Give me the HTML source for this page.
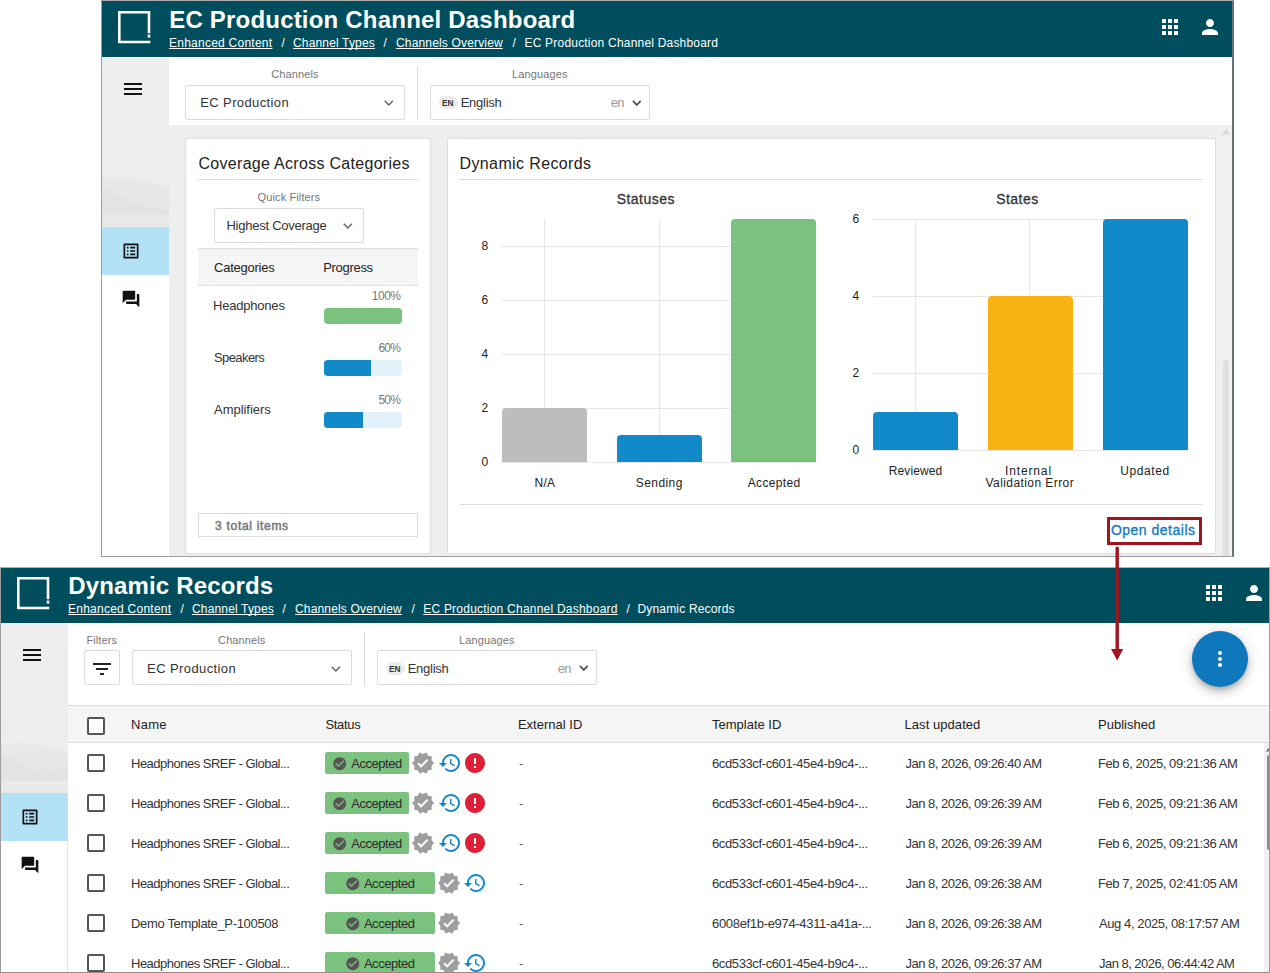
<!DOCTYPE html>
<html><head><meta charset="utf-8"><title>Dynamic Records</title>
<style>
html,body{margin:0;padding:0;background:#fff}
body{width:1270px;height:973px;position:relative;overflow:hidden;font-family:"Liberation Sans",sans-serif}
#p{position:absolute;left:0;top:0;width:1270px;height:973px;overflow:hidden}
#p div,#p svg,#p span{position:absolute;box-sizing:border-box}
#p span{white-space:nowrap;line-height:20px;height:20px}
#p u{text-decoration:underline;text-decoration-thickness:1px;text-underline-offset:1.1px;text-decoration-skip-ink:none}
</style></head>
<body><div id="p">
<div style="left:101px;top:0px;width:1133px;height:557px;border:1px solid #9c9c9c;border-top-color:#aaa;border-right:2px solid #69717b;background:#eee"></div>
<div style="left:102px;top:1px;width:1130px;height:56px;background:#004e5d"></div>
<svg style="left:117.5px;top:11.0px" width="34" height="34" viewBox="0 0 34 34"><path d="M0 1.3 H31 V22.2 M32.3 31 H1.3 V1.3" fill="none" stroke="#fff" stroke-width="2.6" stroke-linejoin="miter" stroke-linecap="butt"/><rect x="29.7" y="23.6" width="2.6" height="3" fill="#fff"/></svg>
<span style="left:169.2px;top:9.93px;font-size:24px;color:#fff;font-weight:bold;letter-spacing:0.201px;">EC Production Channel Dashboard</span>
<span style="left:169px;top:33.09px;font-size:12px;color:#fff;letter-spacing:0.248px;"><u>Enhanced Content</u></span>
<span style="left:281.5px;top:33.09px;font-size:12px;color:#fff;">/</span>
<span style="left:293px;top:33.09px;font-size:12px;color:#fff;letter-spacing:0.162px;"><u>Channel Types</u></span>
<span style="left:383.5px;top:33.09px;font-size:12px;color:#fff;">/</span>
<span style="left:396px;top:33.09px;font-size:12px;color:#fff;letter-spacing:0.164px;"><u>Channels Overview</u></span>
<span style="left:512.5px;top:33.09px;font-size:12px;color:#fff;">/</span>
<span style="left:524.5px;top:33.09px;font-size:12px;color:#fff;letter-spacing:0.201px;">EC Production Channel Dashboard</span>
<svg style="left:1158px;top:15px;" width="24" height="24" viewBox="0 0 24 24"><path fill="#fff" d="M4 8h4V4H4v4zm6 12h4v-4h-4v4zm-6 0h4v-4H4v4zm0-6h4v-4H4v4zm6 0h4v-4h-4v4zm6-10v4h4V4h-4zm-6 4h4V4h-4v4zm6 6h4v-4h-4v4zm0 6h4v-4h-4v4z"/></svg>
<svg style="left:1198px;top:15px;" width="24" height="24" viewBox="0 0 24 24"><path fill="#fff" d="M12 12c2.21 0 4-1.79 4-4s-1.79-4-4-4-4 1.79-4 4 1.79 4 4 4zm0 2c-2.67 0-8 1.34-8 4v2h16v-2c0-2.66-5.33-4-8-4z"/></svg>
<svg style="left:102px;top:57px" width="67" height="170" viewBox="0 0 67 170"><defs><linearGradient id="sg57" x1="0" y1="0" x2="0" y2="1"><stop offset="0" stop-color="#eeeeee"/><stop offset="0.7" stop-color="#eeeded"/><stop offset="1" stop-color="#ececec"/></linearGradient><linearGradient id="mg57" x1="0" y1="0" x2="0" y2="1"><stop offset="0" stop-color="#e9e9e9"/><stop offset="1" stop-color="#e4e4e4"/></linearGradient></defs><rect width="67" height="170" fill="url(#sg57)"/><path d="M0 118 L3 120.5 L6 122.5 L10 121 L16 120 L26 119.8 L33 121 L44 124 L55 127 L67 130 V158.5 H0 Z" fill="url(#mg57)"/><path d="M0 132 L14 137 L30 146 L48 150 L67 153 V158.5 H0 Z" fill="#e2e2e2" opacity="0.55"/><rect y="158.5" width="67" height="1.5" fill="#ececec"/><rect y="160" width="67" height="10" fill="#e8e8e8"/></svg>
<div style="left:102px;top:227px;width:67px;height:48px;background:#b3e2f7"></div>
<div style="left:102px;top:275px;width:67px;height:281px;background:#fff"></div>
<svg style="left:120.6px;top:77.2px;" width="24" height="24" viewBox="0 0 24 24"><path fill="#111" d="M3 18h18v-2H3v2zm0-5h18v-2H3v2zm0-7v2h18V6H3z"/></svg>
<svg style="left:121px;top:241px;" width="20" height="20" viewBox="0 0 24 24"><path fill="#111" d="M19 5v14H5V5h14m1.1-2H3.9c-.5 0-.9.4-.9.9v16.2c0 .4.4.9.9.9h16.2c.4 0 .9-.5.9-.9V3.9c0-.5-.5-.9-.9-.9zM11 7h6v2h-6V7zm0 4h6v2h-6v-2zm0 4h6v2h-6zM7 7h2v2H7zm0 4h2v2H7zm0 4h2v2H7z"/></svg>
<svg style="left:121px;top:289px;" width="20" height="20" viewBox="0 0 24 24"><path fill="#111" d="M21 6h-2v9H6v2c0 .55.45 1 1 1h11l4 4V7c0-.55-.45-1-1-1zm-4 6V3c0-.55-.45-1-1-1H3c-.55 0-1 .45-1 1v14l4-4h10c.55 0 1-.45 1-1z"/></svg>
<div style="left:169px;top:57px;width:1063px;height:68px;background:#fff"></div>
<span style="left:271.3px;top:64.44px;font-size:11px;color:#757575;letter-spacing:0.103px;">Channels</span>
<div style="left:185px;top:84.5px;width:220px;height:35px;background:#fff;border:1px solid #dadada;border-radius:2px"></div>
<span style="left:200.3px;top:92.75px;font-size:13px;color:#333;letter-spacing:0.376px;">EC Production</span>
<svg style="left:383px;top:98.8px" width="11.6" height="8" viewBox="-1 -1 11.6 8"><path d="M0.75 0.75 L4.8 5 L8.85 0.75" fill="none" stroke="#666" stroke-width="1.5" stroke-linecap="butt" stroke-linejoin="miter"/></svg>
<div style="left:417px;top:66px;width:1px;height:54px;background:#dcdcdc"></div>
<span style="left:512px;top:64.44px;font-size:11px;color:#757575;letter-spacing:0.132px;">Languages</span>
<div style="left:430px;top:84.5px;width:220px;height:35px;background:#fff;border:1px solid #dadada;border-radius:2px"></div>
<div style="left:439px;top:96.0px;width:18.5px;height:13px;background:#ececec;border-radius:6.5px"></div>
<span style="left:442.4px;top:92.96px;font-size:9.5px;color:#333;font-weight:bold;transform:scaleX(.87);transform-origin:0 50%;">EN</span>
<span style="left:460.7px;top:92.75px;font-size:13px;color:#333;letter-spacing:-0.268px;">English</span>
<span style="left:610.8px;top:92.75px;font-size:13px;color:#999;letter-spacing:-0.830px;">en</span>
<svg style="left:631.2px;top:98.8px" width="11.6" height="7.9" viewBox="-1 -1 11.6 7.9"><path d="M0.9 0.9 L4.8 4.9 L8.7 0.9" fill="none" stroke="#555" stroke-width="1.8" stroke-linecap="butt" stroke-linejoin="miter"/></svg>
<div style="left:1216px;top:125px;width:16px;height:431px;background:#f0f0f0"></div>
<div style="left:1223px;top:360px;width:6px;height:196px;background:#e0e0e0;border-radius:3px 3px 0 0"></div>
<svg style="left:1221px;top:128px" width="10" height="7" viewBox="0 0 10 7"><path d="M0.5 6.5 L5 0.5 L9.5 6.5 Z" fill="#dedede"/></svg>
<div style="left:185px;top:138px;width:246px;height:416px;background:#fff;border:1px solid #dedede"></div>
<span style="left:198.5px;top:153.71px;font-size:16px;color:#222;letter-spacing:0.294px;">Coverage Across Categories</span>
<div style="left:198px;top:179px;width:220px;height:1px;background:#dcdcdc"></div>
<span style="left:257.6px;top:187.44px;font-size:11px;color:#757575;letter-spacing:0.115px;">Quick Filters</span>
<div style="left:214px;top:207.5px;width:150px;height:35px;background:#fff;border:1px solid #dadada;border-radius:2px"></div>
<span style="left:226.4px;top:215.75px;font-size:13px;color:#333;letter-spacing:-0.242px;">Highest Coverage</span>
<svg style="left:342.2px;top:221.8px" width="11.6" height="8" viewBox="-1 -1 11.6 8"><path d="M0.75 0.75 L4.8 5 L8.85 0.75" fill="none" stroke="#666" stroke-width="1.5" stroke-linecap="butt" stroke-linejoin="miter"/></svg>
<div style="left:198px;top:248px;width:220px;height:38px;background:#f5f5f5;border-top:1px solid #dcdcdc;border-bottom:1px solid #dcdcdc"></div>
<span style="left:214px;top:257.75px;font-size:13px;color:#222;letter-spacing:-0.241px;">Categories</span>
<span style="left:323.2px;top:257.75px;font-size:13px;color:#222;letter-spacing:-0.303px;">Progress</span>
<span style="left:213px;top:295.75px;font-size:13px;color:#333;letter-spacing:-0.203px;">Headphones</span>
<span style="left:371.8px;top:286.09px;font-size:12px;color:#777;letter-spacing:-0.507px;">100%</span>
<div style="left:324px;top:308px;width:78px;height:16px;background:#7bc27f;border-radius:4px;overflow:hidden"></div>
<span style="left:214px;top:347.75px;font-size:13px;color:#333;letter-spacing:-0.589px;">Speakers</span>
<span style="left:378.4px;top:338.09px;font-size:12px;color:#777;letter-spacing:-0.724px;">60%</span>
<div style="left:324px;top:360px;width:78px;height:16px;background:#e2f1fa;border-radius:4px;overflow:hidden"></div>
<div style="left:324px;top:360px;width:47px;height:16px;background:#128aca;border-radius:4px 0 0 4px"></div>
<span style="left:214px;top:399.75px;font-size:13px;color:#333;letter-spacing:-0.029px;">Amplifiers</span>
<span style="left:378.4px;top:390.09px;font-size:12px;color:#777;letter-spacing:-0.724px;">50%</span>
<div style="left:324px;top:412px;width:78px;height:16px;background:#e2f1fa;border-radius:4px;overflow:hidden"></div>
<div style="left:324px;top:412px;width:39px;height:16px;background:#128aca;border-radius:4px 0 0 4px"></div>
<div style="left:198px;top:513px;width:220px;height:24px;border:1px solid #dcdcdc;background:#fff"></div>
<span style="left:215.1px;top:516.09px;font-size:12px;color:#777;letter-spacing:0.692px;-webkit-text-stroke:0.5px currentColor;">3 total items</span>
<div style="left:447px;top:138px;width:769px;height:416px;background:#fff;border:1px solid #dedede"></div>
<span style="left:459.5px;top:153.71px;font-size:16px;color:#222;letter-spacing:0.382px;">Dynamic Records</span>
<div style="left:460px;top:179px;width:743px;height:1px;background:#dcdcdc"></div>
<div style="left:460px;top:504px;width:743px;height:1px;background:#dcdcdc"></div>
<span style="left:616.7px;top:189.40px;font-size:14px;color:#333;letter-spacing:0.461px;-webkit-text-stroke:0.3px currentColor;">Statuses</span>
<div style="left:502px;top:461.5px;width:314.4px;height:1.2px;background:#e6e6e6"></div>
<span style="left:481.6px;top:452.09px;font-size:12px;color:#222;">0</span>
<div style="left:502px;top:407.5px;width:314.4px;height:1.2px;background:#e6e6e6"></div>
<span style="left:481.6px;top:398.09px;font-size:12px;color:#222;">2</span>
<div style="left:502px;top:353.5px;width:314.4px;height:1.2px;background:#e6e6e6"></div>
<span style="left:481.6px;top:344.09px;font-size:12px;color:#222;">4</span>
<div style="left:502px;top:299.5px;width:314.4px;height:1.2px;background:#e6e6e6"></div>
<span style="left:481.6px;top:290.09px;font-size:12px;color:#222;">6</span>
<div style="left:502px;top:245.5px;width:314.4px;height:1.2px;background:#e6e6e6"></div>
<span style="left:481.6px;top:236.09px;font-size:12px;color:#222;">8</span>
<div style="left:544.0px;top:219px;width:1.2px;height:243px;background:#e6e6e6"></div>
<div style="left:658.5px;top:219px;width:1.2px;height:243px;background:#e6e6e6"></div>
<div style="left:773.0px;top:219px;width:1.2px;height:243px;background:#e6e6e6"></div>
<div style="left:501.8px;top:408px;width:85.2px;height:54px;background:#bdbdbd;border-radius:4px 4px 0 0"></div>
<div style="left:616.5px;top:435px;width:85.2px;height:27px;background:#128aca;border-radius:4px 4px 0 0"></div>
<div style="left:731.2px;top:219px;width:85.2px;height:243px;background:#7bc27f;border-radius:4px 4px 0 0"></div>
<span style="left:534.6px;top:473.09px;font-size:12px;color:#222;letter-spacing:0.200px;">N/A</span>
<span style="left:635.8px;top:473.09px;font-size:12px;color:#222;letter-spacing:0.422px;">Sending</span>
<span style="left:747.8px;top:473.09px;font-size:12px;color:#222;letter-spacing:0.320px;">Accepted</span>
<span style="left:996.2px;top:189.40px;font-size:14px;color:#333;letter-spacing:0.462px;-webkit-text-stroke:0.3px currentColor;">States</span>
<div style="left:873px;top:449.5px;width:314.4px;height:1.2px;background:#e6e6e6"></div>
<span style="left:852.4px;top:440.09px;font-size:12px;color:#222;">0</span>
<div style="left:873px;top:372.5px;width:314.4px;height:1.2px;background:#e6e6e6"></div>
<span style="left:852.4px;top:363.09px;font-size:12px;color:#222;">2</span>
<div style="left:873px;top:295.5px;width:314.4px;height:1.2px;background:#e6e6e6"></div>
<span style="left:852.4px;top:286.09px;font-size:12px;color:#222;">4</span>
<div style="left:873px;top:218.5px;width:314.4px;height:1.2px;background:#e6e6e6"></div>
<span style="left:852.4px;top:209.09px;font-size:12px;color:#222;">6</span>
<div style="left:915.0px;top:219px;width:1.2px;height:231px;background:#e6e6e6"></div>
<div style="left:1029.0px;top:219px;width:1.2px;height:231px;background:#e6e6e6"></div>
<div style="left:1144.5px;top:219px;width:1.2px;height:231px;background:#e6e6e6"></div>
<div style="left:873px;top:411.5px;width:85.2px;height:38.5px;background:#128aca;border-radius:4px 4px 0 0"></div>
<div style="left:987.7px;top:296px;width:85.2px;height:154px;background:#f8b214;border-radius:4px 4px 0 0"></div>
<div style="left:1102.5px;top:219px;width:85.2px;height:231px;background:#128aca;border-radius:4px 4px 0 0"></div>
<span style="left:888.8px;top:461.09px;font-size:12px;color:#222;letter-spacing:0.083px;">Reviewed</span>
<span style="left:1005px;top:461.09px;font-size:12px;color:#222;letter-spacing:0.863px;">Internal</span>
<span style="left:985.5px;top:473.09px;font-size:12px;color:#222;letter-spacing:0.425px;">Validation Error</span>
<span style="left:1120.3px;top:461.09px;font-size:12px;color:#222;letter-spacing:0.584px;">Updated</span>
<span style="left:1110.9px;top:520.40px;font-size:14px;color:#177bc1;letter-spacing:0.499px;-webkit-text-stroke:0.35px currentColor;">Open details</span>
<div style="left:0px;top:567px;width:1270px;height:406px;border:1px solid #9c9c9c;border-top-color:#b0b0b0;background:#fff"></div>
<div style="left:1px;top:568px;width:1268px;height:55px;background:#004e5d"></div>
<svg style="left:16.5px;top:577.0px" width="34" height="34" viewBox="0 0 34 34"><path d="M0 1.3 H31 V22.2 M32.3 31 H1.3 V1.3" fill="none" stroke="#fff" stroke-width="2.6" stroke-linejoin="miter" stroke-linecap="butt"/><rect x="29.7" y="23.6" width="2.6" height="3" fill="#fff"/></svg>
<span style="left:68.2px;top:575.93px;font-size:24px;color:#fff;font-weight:bold;letter-spacing:0.157px;">Dynamic Records</span>
<span style="left:68px;top:599.09px;font-size:12px;color:#fff;letter-spacing:0.248px;"><u>Enhanced Content</u></span>
<span style="left:180.5px;top:599.09px;font-size:12px;color:#fff;">/</span>
<span style="left:192px;top:599.09px;font-size:12px;color:#fff;letter-spacing:0.162px;"><u>Channel Types</u></span>
<span style="left:282.5px;top:599.09px;font-size:12px;color:#fff;">/</span>
<span style="left:295px;top:599.09px;font-size:12px;color:#fff;letter-spacing:0.164px;"><u>Channels Overview</u></span>
<span style="left:411.5px;top:599.09px;font-size:12px;color:#fff;">/</span>
<span style="left:423.2px;top:599.09px;font-size:12px;color:#fff;letter-spacing:0.228px;"><u>EC Production Channel Dashboard</u></span>
<span style="left:626.5px;top:599.09px;font-size:12px;color:#fff;">/</span>
<span style="left:637.5px;top:599.09px;font-size:12px;color:#fff;letter-spacing:0.172px;">Dynamic Records</span>
<svg style="left:1202px;top:581px;" width="24" height="24" viewBox="0 0 24 24"><path fill="#fff" d="M4 8h4V4H4v4zm6 12h4v-4h-4v4zm-6 0h4v-4H4v4zm0-6h4v-4H4v4zm6 0h4v-4h-4v4zm6-10v4h4V4h-4zm-6 4h4V4h-4v4zm6 6h4v-4h-4v4zm0 6h4v-4h-4v4z"/></svg>
<svg style="left:1242px;top:581px;" width="24" height="24" viewBox="0 0 24 24"><path fill="#fff" d="M12 12c2.21 0 4-1.79 4-4s-1.79-4-4-4-4 1.79-4 4 1.79 4 4 4zm0 2c-2.67 0-8 1.34-8 4v2h16v-2c0-2.66-5.33-4-8-4z"/></svg>
<svg style="left:1px;top:623px" width="67" height="170" viewBox="0 0 67 170"><defs><linearGradient id="sg623" x1="0" y1="0" x2="0" y2="1"><stop offset="0" stop-color="#eeeeee"/><stop offset="0.7" stop-color="#eeeded"/><stop offset="1" stop-color="#ececec"/></linearGradient><linearGradient id="mg623" x1="0" y1="0" x2="0" y2="1"><stop offset="0" stop-color="#e9e9e9"/><stop offset="1" stop-color="#e4e4e4"/></linearGradient></defs><rect width="67" height="170" fill="url(#sg623)"/><path d="M0 118 L3 120.5 L6 122.5 L10 121 L16 120 L26 119.8 L33 121 L44 124 L55 127 L67 130 V158.5 H0 Z" fill="url(#mg623)"/><path d="M0 132 L14 137 L30 146 L48 150 L67 153 V158.5 H0 Z" fill="#e2e2e2" opacity="0.55"/><rect y="158.5" width="67" height="1.5" fill="#ececec"/><rect y="160" width="67" height="10" fill="#e8e8e8"/></svg>
<div style="left:1px;top:793px;width:67px;height:48px;background:#b3e2f7"></div>
<div style="left:1px;top:841px;width:67px;height:131px;background:#fff;border-right:1px solid #e2e2e2"></div>
<svg style="left:19.6px;top:643.2px;" width="24" height="24" viewBox="0 0 24 24"><path fill="#111" d="M3 18h18v-2H3v2zm0-5h18v-2H3v2zm0-7v2h18V6H3z"/></svg>
<svg style="left:20px;top:807px;" width="20" height="20" viewBox="0 0 24 24"><path fill="#111" d="M19 5v14H5V5h14m1.1-2H3.9c-.5 0-.9.4-.9.9v16.2c0 .4.4.9.9.9h16.2c.4 0 .9-.5.9-.9V3.9c0-.5-.5-.9-.9-.9zM11 7h6v2h-6V7zm0 4h6v2h-6v-2zm0 4h6v2h-6zM7 7h2v2H7zm0 4h2v2H7zm0 4h2v2H7z"/></svg>
<svg style="left:20px;top:855px;" width="20" height="20" viewBox="0 0 24 24"><path fill="#111" d="M21 6h-2v9H6v2c0 .55.45 1 1 1h11l4 4V7c0-.55-.45-1-1-1zm-4 6V3c0-.55-.45-1-1-1H3c-.55 0-1 .45-1 1v14l4-4h10c.55 0 1-.45 1-1z"/></svg>
<span style="left:86.4px;top:630.44px;font-size:11px;color:#757575;letter-spacing:0.093px;">Filters</span>
<div style="left:84px;top:650px;width:36px;height:35px;background:#fff;border:1px solid #dadada;border-radius:2px"></div>
<svg style="left:90px;top:656.7px;" width="24" height="24" viewBox="0 0 24 24"><path fill="#222" d="M10 18h4v-2h-4v2zM3 6v2h18V6H3zm3 7h12v-2H6v2z"/></svg>
<span style="left:218.1px;top:630.44px;font-size:11px;color:#757575;letter-spacing:0.089px;">Channels</span>
<div style="left:132px;top:650px;width:220px;height:35px;background:#fff;border:1px solid #dadada;border-radius:2px"></div>
<span style="left:147.1px;top:658.75px;font-size:13px;color:#333;letter-spacing:0.401px;">EC Production</span>
<svg style="left:330px;top:664.8px" width="11.6" height="8" viewBox="-1 -1 11.6 8"><path d="M0.75 0.75 L4.8 5 L8.85 0.75" fill="none" stroke="#666" stroke-width="1.5" stroke-linecap="butt" stroke-linejoin="miter"/></svg>
<div style="left:364px;top:632px;width:1px;height:54px;background:#dcdcdc"></div>
<span style="left:459px;top:630.44px;font-size:11px;color:#757575;letter-spacing:0.132px;">Languages</span>
<div style="left:377px;top:650px;width:220px;height:35px;background:#fff;border:1px solid #dadada;border-radius:2px"></div>
<div style="left:386px;top:661.5px;width:18.5px;height:13px;background:#ececec;border-radius:6.5px"></div>
<span style="left:389.4px;top:658.96px;font-size:9.5px;color:#333;font-weight:bold;transform:scaleX(.87);transform-origin:0 50%;">EN</span>
<span style="left:407.7px;top:658.75px;font-size:13px;color:#333;letter-spacing:-0.268px;">English</span>
<span style="left:557.8px;top:658.75px;font-size:13px;color:#999;letter-spacing:-0.830px;">en</span>
<svg style="left:578.2px;top:664.3px" width="11.6" height="7.9" viewBox="-1 -1 11.6 7.9"><path d="M0.9 0.9 L4.8 4.9 L8.7 0.9" fill="none" stroke="#555" stroke-width="1.8" stroke-linecap="butt" stroke-linejoin="miter"/></svg>
<div style="left:1192px;top:631px;width:56px;height:56px;background:#0f77bc;border-radius:50%;box-shadow:0 3px 5px -1px rgba(0,0,0,.2),0 6px 10px 0 rgba(0,0,0,.14),0 1px 18px 0 rgba(0,0,0,.12)"></div>
<svg style="left:1208px;top:647px;" width="24" height="24" viewBox="0 0 24 24"><path fill="#fff" d="M12 8c1.1 0 2-.9 2-2s-.9-2-2-2-2 .9-2 2 .9 2 2 2zm0 2c-1.1 0-2 .9-2 2s.9 2 2 2 2-.9 2-2-.9-2-2-2zm0 6c-1.1 0-2 .9-2 2s.9 2 2 2 2-.9 2-2-.9-2-2-2z"/></svg>
<div style="left:68px;top:705px;width:1201px;height:38px;background:#f5f5f5;border-top:1px solid #dcdcdc;border-bottom:1px solid #dcdcdc"></div>
<div style="left:87px;top:717px;width:18px;height:18px;border:2px solid #555;border-radius:2px;background:#fff"></div>
<span style="left:131px;top:714.75px;font-size:13px;color:#222;letter-spacing:0.284px;">Name</span>
<span style="left:325.5px;top:714.75px;font-size:13px;color:#222;letter-spacing:-0.331px;">Status</span>
<span style="left:517.9px;top:714.75px;font-size:13px;color:#222;letter-spacing:0.009px;">External ID</span>
<span style="left:712px;top:714.75px;font-size:13px;color:#222;">Template ID</span>
<span style="left:904.5px;top:714.75px;font-size:13px;color:#222;letter-spacing:0.060px;">Last updated</span>
<span style="left:1098px;top:714.75px;font-size:13px;color:#222;letter-spacing:0.004px;">Published</span>
<div style="left:87px;top:754px;width:18px;height:18px;border:2px solid #555;border-radius:2px;background:#fff"></div>
<span style="left:131px;top:753.75px;font-size:13px;color:#333;letter-spacing:-0.506px;">Headphones SREF - Global...</span>
<div style="left:325px;top:752px;width:84px;height:22px;background:#7bc27f;border-radius:2px"></div>
<svg style="left:331.8px;top:756px;" width="15.5" height="15.5" viewBox="0 0 24 24"><path fill="#555" d="M12 2C6.48 2 2 6.48 2 12s4.48 10 10 10 10-4.48 10-10S17.52 2 12 2zm-2 15l-5-5 1.41-1.41L10 14.17l7.59-7.59L19 8l-9 9z"/></svg>
<span style="left:351.2px;top:753.75px;font-size:13px;color:#2b2b2b;letter-spacing:-0.439px;">Accepted</span>
<svg style="left:410.7px;top:751px;" width="24" height="24" viewBox="0 0 24 24"><path fill="#9e9e9e" d="M23 12l-2.44-2.79.34-3.69-3.61-.82-1.89-3.2L12 2.96 8.6 1.5 6.71 4.69 3.1 5.5l.34 3.7L1 12l2.44 2.79-.34 3.7 3.61.82L8.6 22.5l3.4-1.47 3.4 1.46 1.89-3.19 3.61-.82-.34-3.69L23 12zm-12.91 4.72l-3.8-3.81 1.48-1.48 2.32 2.33 5.85-5.87 1.48 1.48-7.33 7.35z"/></svg>
<svg style="left:437.6px;top:751px;" width="24" height="24" viewBox="0 0 24 24"><path fill="#128aca" d="M13 3c-4.97 0-9 4.03-9 9H1l3.89 3.89.07.14L9 12H6c0-3.87 3.13-7 7-7s7 3.13 7 7-3.13 7-7 7c-1.93 0-3.68-.79-4.94-2.06l-1.42 1.42C8.27 19.99 10.51 21 13 21c4.97 0 9-4.03 9-9s-4.03-9-9-9zm-1 5v5l4.28 2.54.72-1.21-3.5-2.08V8H12z"/></svg>
<svg style="left:463.0px;top:751px;" width="24" height="24" viewBox="0 0 24 24"><path fill="#dd2036" d="M12 2C6.48 2 2 6.48 2 12s4.48 10 10 10 10-4.48 10-10S17.52 2 12 2zm1 15h-2v-2h2v2zm0-4h-2V7h2v6z"/></svg>
<span style="left:519px;top:753.75px;font-size:13px;color:#666;">-</span>
<span style="left:712px;top:753.75px;font-size:13px;color:#333;letter-spacing:-0.385px;">6cd533cf-c601-45e4-b9c4-...</span>
<span style="left:905.5px;top:753.75px;font-size:13px;color:#333;letter-spacing:-0.507px;">Jan 8, 2026, 09:26:40 AM</span>
<span style="left:1098px;top:753.75px;font-size:13px;color:#333;letter-spacing:-0.422px;">Feb 6, 2025, 09:21:36 AM</span>
<div style="left:87px;top:794px;width:18px;height:18px;border:2px solid #555;border-radius:2px;background:#fff"></div>
<span style="left:131px;top:793.75px;font-size:13px;color:#333;letter-spacing:-0.506px;">Headphones SREF - Global...</span>
<div style="left:325px;top:792px;width:84px;height:22px;background:#7bc27f;border-radius:2px"></div>
<svg style="left:331.8px;top:796px;" width="15.5" height="15.5" viewBox="0 0 24 24"><path fill="#555" d="M12 2C6.48 2 2 6.48 2 12s4.48 10 10 10 10-4.48 10-10S17.52 2 12 2zm-2 15l-5-5 1.41-1.41L10 14.17l7.59-7.59L19 8l-9 9z"/></svg>
<span style="left:351.2px;top:793.75px;font-size:13px;color:#2b2b2b;letter-spacing:-0.439px;">Accepted</span>
<svg style="left:410.7px;top:791px;" width="24" height="24" viewBox="0 0 24 24"><path fill="#9e9e9e" d="M23 12l-2.44-2.79.34-3.69-3.61-.82-1.89-3.2L12 2.96 8.6 1.5 6.71 4.69 3.1 5.5l.34 3.7L1 12l2.44 2.79-.34 3.7 3.61.82L8.6 22.5l3.4-1.47 3.4 1.46 1.89-3.19 3.61-.82-.34-3.69L23 12zm-12.91 4.72l-3.8-3.81 1.48-1.48 2.32 2.33 5.85-5.87 1.48 1.48-7.33 7.35z"/></svg>
<svg style="left:437.6px;top:791px;" width="24" height="24" viewBox="0 0 24 24"><path fill="#128aca" d="M13 3c-4.97 0-9 4.03-9 9H1l3.89 3.89.07.14L9 12H6c0-3.87 3.13-7 7-7s7 3.13 7 7-3.13 7-7 7c-1.93 0-3.68-.79-4.94-2.06l-1.42 1.42C8.27 19.99 10.51 21 13 21c4.97 0 9-4.03 9-9s-4.03-9-9-9zm-1 5v5l4.28 2.54.72-1.21-3.5-2.08V8H12z"/></svg>
<svg style="left:463.0px;top:791px;" width="24" height="24" viewBox="0 0 24 24"><path fill="#dd2036" d="M12 2C6.48 2 2 6.48 2 12s4.48 10 10 10 10-4.48 10-10S17.52 2 12 2zm1 15h-2v-2h2v2zm0-4h-2V7h2v6z"/></svg>
<span style="left:519px;top:793.75px;font-size:13px;color:#666;">-</span>
<span style="left:712px;top:793.75px;font-size:13px;color:#333;letter-spacing:-0.385px;">6cd533cf-c601-45e4-b9c4-...</span>
<span style="left:905.5px;top:793.75px;font-size:13px;color:#333;letter-spacing:-0.507px;">Jan 8, 2026, 09:26:39 AM</span>
<span style="left:1098px;top:793.75px;font-size:13px;color:#333;letter-spacing:-0.422px;">Feb 6, 2025, 09:21:36 AM</span>
<div style="left:87px;top:834px;width:18px;height:18px;border:2px solid #555;border-radius:2px;background:#fff"></div>
<span style="left:131px;top:833.75px;font-size:13px;color:#333;letter-spacing:-0.506px;">Headphones SREF - Global...</span>
<div style="left:325px;top:832px;width:84px;height:22px;background:#7bc27f;border-radius:2px"></div>
<svg style="left:331.8px;top:836px;" width="15.5" height="15.5" viewBox="0 0 24 24"><path fill="#555" d="M12 2C6.48 2 2 6.48 2 12s4.48 10 10 10 10-4.48 10-10S17.52 2 12 2zm-2 15l-5-5 1.41-1.41L10 14.17l7.59-7.59L19 8l-9 9z"/></svg>
<span style="left:351.2px;top:833.75px;font-size:13px;color:#2b2b2b;letter-spacing:-0.439px;">Accepted</span>
<svg style="left:410.7px;top:831px;" width="24" height="24" viewBox="0 0 24 24"><path fill="#9e9e9e" d="M23 12l-2.44-2.79.34-3.69-3.61-.82-1.89-3.2L12 2.96 8.6 1.5 6.71 4.69 3.1 5.5l.34 3.7L1 12l2.44 2.79-.34 3.7 3.61.82L8.6 22.5l3.4-1.47 3.4 1.46 1.89-3.19 3.61-.82-.34-3.69L23 12zm-12.91 4.72l-3.8-3.81 1.48-1.48 2.32 2.33 5.85-5.87 1.48 1.48-7.33 7.35z"/></svg>
<svg style="left:437.6px;top:831px;" width="24" height="24" viewBox="0 0 24 24"><path fill="#128aca" d="M13 3c-4.97 0-9 4.03-9 9H1l3.89 3.89.07.14L9 12H6c0-3.87 3.13-7 7-7s7 3.13 7 7-3.13 7-7 7c-1.93 0-3.68-.79-4.94-2.06l-1.42 1.42C8.27 19.99 10.51 21 13 21c4.97 0 9-4.03 9-9s-4.03-9-9-9zm-1 5v5l4.28 2.54.72-1.21-3.5-2.08V8H12z"/></svg>
<svg style="left:463.0px;top:831px;" width="24" height="24" viewBox="0 0 24 24"><path fill="#dd2036" d="M12 2C6.48 2 2 6.48 2 12s4.48 10 10 10 10-4.48 10-10S17.52 2 12 2zm1 15h-2v-2h2v2zm0-4h-2V7h2v6z"/></svg>
<span style="left:519px;top:833.75px;font-size:13px;color:#666;">-</span>
<span style="left:712px;top:833.75px;font-size:13px;color:#333;letter-spacing:-0.385px;">6cd533cf-c601-45e4-b9c4-...</span>
<span style="left:905.5px;top:833.75px;font-size:13px;color:#333;letter-spacing:-0.507px;">Jan 8, 2026, 09:26:39 AM</span>
<span style="left:1098px;top:833.75px;font-size:13px;color:#333;letter-spacing:-0.422px;">Feb 6, 2025, 09:21:36 AM</span>
<div style="left:87px;top:874px;width:18px;height:18px;border:2px solid #555;border-radius:2px;background:#fff"></div>
<span style="left:131px;top:873.75px;font-size:13px;color:#333;letter-spacing:-0.506px;">Headphones SREF - Global...</span>
<div style="left:325px;top:872px;width:110px;height:22px;background:#7bc27f;border-radius:2px"></div>
<svg style="left:344.6px;top:876px;" width="15.5" height="15.5" viewBox="0 0 24 24"><path fill="#555" d="M12 2C6.48 2 2 6.48 2 12s4.48 10 10 10 10-4.48 10-10S17.52 2 12 2zm-2 15l-5-5 1.41-1.41L10 14.17l7.59-7.59L19 8l-9 9z"/></svg>
<span style="left:363.9px;top:873.75px;font-size:13px;color:#2b2b2b;letter-spacing:-0.439px;">Accepted</span>
<svg style="left:437.2px;top:871px;" width="24" height="24" viewBox="0 0 24 24"><path fill="#9e9e9e" d="M23 12l-2.44-2.79.34-3.69-3.61-.82-1.89-3.2L12 2.96 8.6 1.5 6.71 4.69 3.1 5.5l.34 3.7L1 12l2.44 2.79-.34 3.7 3.61.82L8.6 22.5l3.4-1.47 3.4 1.46 1.89-3.19 3.61-.82-.34-3.69L23 12zm-12.91 4.72l-3.8-3.81 1.48-1.48 2.32 2.33 5.85-5.87 1.48 1.48-7.33 7.35z"/></svg>
<svg style="left:462.7px;top:871px;" width="24" height="24" viewBox="0 0 24 24"><path fill="#128aca" d="M13 3c-4.97 0-9 4.03-9 9H1l3.89 3.89.07.14L9 12H6c0-3.87 3.13-7 7-7s7 3.13 7 7-3.13 7-7 7c-1.93 0-3.68-.79-4.94-2.06l-1.42 1.42C8.27 19.99 10.51 21 13 21c4.97 0 9-4.03 9-9s-4.03-9-9-9zm-1 5v5l4.28 2.54.72-1.21-3.5-2.08V8H12z"/></svg>
<span style="left:519px;top:873.75px;font-size:13px;color:#666;">-</span>
<span style="left:712px;top:873.75px;font-size:13px;color:#333;letter-spacing:-0.385px;">6cd533cf-c601-45e4-b9c4-...</span>
<span style="left:905.5px;top:873.75px;font-size:13px;color:#333;letter-spacing:-0.507px;">Jan 8, 2026, 09:26:38 AM</span>
<span style="left:1098px;top:873.75px;font-size:13px;color:#333;letter-spacing:-0.422px;">Feb 7, 2025, 02:41:05 AM</span>
<div style="left:87px;top:914px;width:18px;height:18px;border:2px solid #555;border-radius:2px;background:#fff"></div>
<span style="left:131px;top:913.75px;font-size:13px;color:#333;letter-spacing:-0.334px;">Demo Template_P-100508</span>
<div style="left:325px;top:912px;width:110px;height:22px;background:#7bc27f;border-radius:2px"></div>
<svg style="left:344.6px;top:916px;" width="15.5" height="15.5" viewBox="0 0 24 24"><path fill="#555" d="M12 2C6.48 2 2 6.48 2 12s4.48 10 10 10 10-4.48 10-10S17.52 2 12 2zm-2 15l-5-5 1.41-1.41L10 14.17l7.59-7.59L19 8l-9 9z"/></svg>
<span style="left:363.9px;top:913.75px;font-size:13px;color:#2b2b2b;letter-spacing:-0.439px;">Accepted</span>
<svg style="left:437.2px;top:911px;" width="24" height="24" viewBox="0 0 24 24"><path fill="#9e9e9e" d="M23 12l-2.44-2.79.34-3.69-3.61-.82-1.89-3.2L12 2.96 8.6 1.5 6.71 4.69 3.1 5.5l.34 3.7L1 12l2.44 2.79-.34 3.7 3.61.82L8.6 22.5l3.4-1.47 3.4 1.46 1.89-3.19 3.61-.82-.34-3.69L23 12zm-12.91 4.72l-3.8-3.81 1.48-1.48 2.32 2.33 5.85-5.87 1.48 1.48-7.33 7.35z"/></svg>
<span style="left:519px;top:913.75px;font-size:13px;color:#666;">-</span>
<span style="left:712px;top:913.75px;font-size:13px;color:#333;letter-spacing:-0.318px;">6008ef1b-e974-4311-a41a-...</span>
<span style="left:905.5px;top:913.75px;font-size:13px;color:#333;letter-spacing:-0.507px;">Jan 8, 2026, 09:26:38 AM</span>
<span style="left:1099px;top:913.75px;font-size:13px;color:#333;letter-spacing:-0.410px;">Aug 4, 2025, 08:17:57 AM</span>
<div style="left:87px;top:954px;width:18px;height:18px;border:2px solid #555;border-radius:2px;background:#fff"></div>
<span style="left:131px;top:953.75px;font-size:13px;color:#333;letter-spacing:-0.506px;">Headphones SREF - Global...</span>
<div style="left:325px;top:952px;width:110px;height:22px;background:#7bc27f;border-radius:2px"></div>
<svg style="left:344.6px;top:956px;" width="15.5" height="15.5" viewBox="0 0 24 24"><path fill="#555" d="M12 2C6.48 2 2 6.48 2 12s4.48 10 10 10 10-4.48 10-10S17.52 2 12 2zm-2 15l-5-5 1.41-1.41L10 14.17l7.59-7.59L19 8l-9 9z"/></svg>
<span style="left:363.9px;top:953.75px;font-size:13px;color:#2b2b2b;letter-spacing:-0.439px;">Accepted</span>
<svg style="left:437.2px;top:951px;" width="24" height="24" viewBox="0 0 24 24"><path fill="#9e9e9e" d="M23 12l-2.44-2.79.34-3.69-3.61-.82-1.89-3.2L12 2.96 8.6 1.5 6.71 4.69 3.1 5.5l.34 3.7L1 12l2.44 2.79-.34 3.7 3.61.82L8.6 22.5l3.4-1.47 3.4 1.46 1.89-3.19 3.61-.82-.34-3.69L23 12zm-12.91 4.72l-3.8-3.81 1.48-1.48 2.32 2.33 5.85-5.87 1.48 1.48-7.33 7.35z"/></svg>
<svg style="left:462.7px;top:951px;" width="24" height="24" viewBox="0 0 24 24"><path fill="#128aca" d="M13 3c-4.97 0-9 4.03-9 9H1l3.89 3.89.07.14L9 12H6c0-3.87 3.13-7 7-7s7 3.13 7 7-3.13 7-7 7c-1.93 0-3.68-.79-4.94-2.06l-1.42 1.42C8.27 19.99 10.51 21 13 21c4.97 0 9-4.03 9-9s-4.03-9-9-9zm-1 5v5l4.28 2.54.72-1.21-3.5-2.08V8H12z"/></svg>
<span style="left:519px;top:953.75px;font-size:13px;color:#666;">-</span>
<span style="left:712px;top:953.75px;font-size:13px;color:#333;letter-spacing:-0.385px;">6cd533cf-c601-45e4-b9c4-...</span>
<span style="left:905.5px;top:953.75px;font-size:13px;color:#333;letter-spacing:-0.507px;">Jan 8, 2026, 09:26:37 AM</span>
<span style="left:1099px;top:953.75px;font-size:13px;color:#333;letter-spacing:-0.533px;">Jan 8, 2026, 06:44:42 AM</span>
<div style="left:1264px;top:743px;width:5px;height:229px;background:#f1f1f1"></div>
<div style="left:1267px;top:755px;width:3px;height:95px;background:#8c8c8c;border-radius:2px 0 0 2px"></div>
<svg style="left:1265px;top:746px" width="5" height="6" viewBox="0 0 5 6"><path d="M0.5 5.5 L5 0.5 V5.5 Z" fill="#777"/></svg>
<div style="left:0px;top:972px;width:1270px;height:1px;background:#8e8e8e"></div>
<div style="left:1269px;top:567px;width:1px;height:406px;background:#9c9c9c"></div>
<div style="left:1107px;top:517px;width:95px;height:28px;border:3px solid #a1131f"></div>
<svg style="left:1108px;top:544px" width="18" height="118" viewBox="0 0 18 118"><path d="M9.2 4.2 V106" stroke="#a1131f" stroke-width="3.4" stroke-linecap="round" fill="none"/><path d="M3 105 H15.2 L9.2 116.5 Z" fill="#a1131f"/></svg>
</div></body></html>
